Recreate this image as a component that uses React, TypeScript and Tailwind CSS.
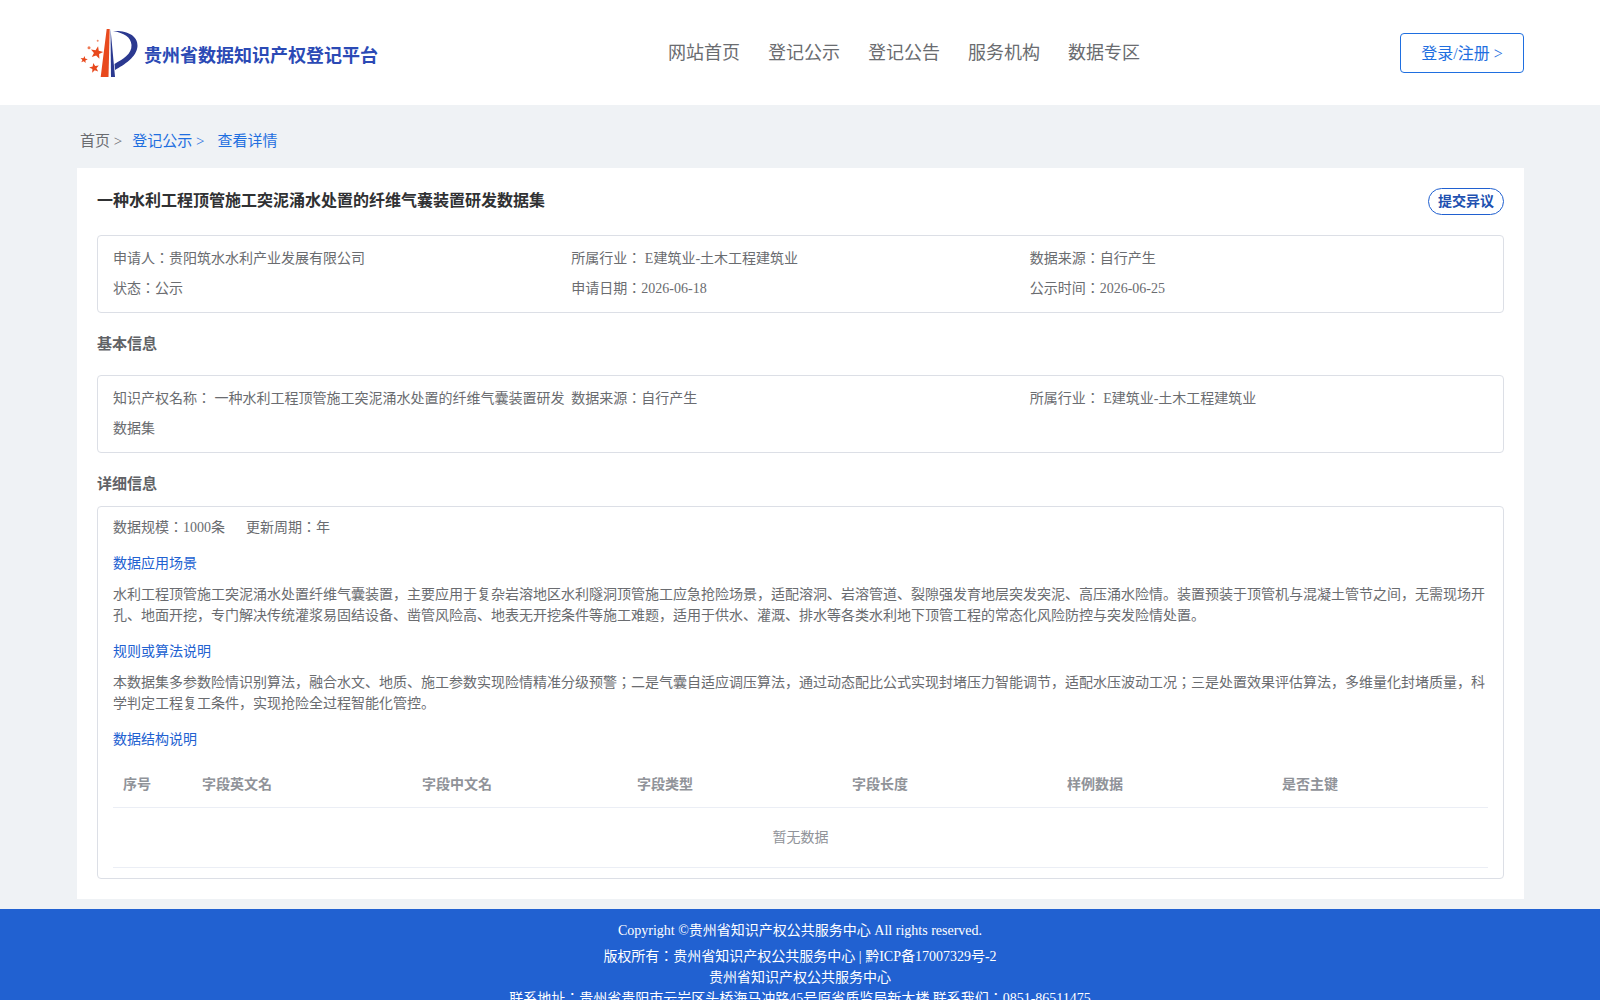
const FONT = "font-['Liberation_Serif','Noto_Sans_CJK_JP',serif]";

function star(cx: number, cy: number, r: number, rot: number) {
  const pts: string[] = [];
  for (let i = 0; i < 10; i++) {
    const a = ((rot + i * 36 - 90) * Math.PI) / 180;
    const rr = i % 2 === 0 ? r : r * 0.42;
    pts.push(`${(cx + rr * Math.cos(a)).toFixed(2)},${(cy + rr * Math.sin(a)).toFixed(2)}`);
  }
  return pts.join(" ");
}

function Logo() {
  return (
    <svg width="60" height="52" viewBox="0 0 60 52" className="shrink-0">
      <path d="M26.700 2 L29.700 2 L28.500 50 L20.700 50 Z" fill="#e8491d" />
      <path d="M30.500 2 L35 50 L31 50 Z" fill="#2b3990" />
      <path d="M33 4 C46 3 58 8 57.500 19 C57 30 44 38 35 43 L34.500 37 C43 32 52 27 51.500 18 C51 10 44 6 33 4 Z" fill="#2b3990" />
      <polygon points={star(16.7, 25.7, 6.6, 12)} fill="#e8491d" />
      <polygon points={star(4, 32.7, 3.8, 10)} fill="#e8491d" />
      <polygon points={star(14.3, 41, 5.2, -12)} fill="#e8491d" />
      <circle cx="9" cy="20.700" r="1.500" fill="#ee7a55" />
      <circle cx="17.700" cy="13.700" r="1" fill="#ee8a6a" />
    </svg>
  );
}

function Box({ children, className = "" }: { children: React.ReactNode; className?: string }) {
  return <div className={`rounded border border-[#dcdfe6] ${className}`}>{children}</div>;
}

const navs = ["网站首页", "登记公示", "登记公告", "服务机构", "数据专区"];
const cols = [
  ["序号", "w-[79px]"],
  ["字段英文名", "w-[220px]"],
  ["字段中文名", "w-[215px]"],
  ["字段类型", "w-[215px]"],
  ["字段长度", "w-[215px]"],
  ["样例数据", "w-[215px]"],
  ["是否主键", "flex-1"],
];

export default function App() {
  return (
    <div className={`${FONT} h-[1000px] overflow-hidden bg-[#eff2f5] text-[14px] text-[#6a6c70]`}>
      <header className="flex h-[105px] items-center bg-white pl-[80px] pr-[76px]">
        <div className="flex w-[470px] items-center">
          <Logo />
          <span className="ml-[4px] mt-[8px] text-[18px] font-bold text-[#2b4ab5]">贵州省数据知识产权登记平台</span>
        </div>
        <nav className="mt-[1px] ml-[118px] flex gap-[28px] text-[18px] text-[#6a6c70]">
          {navs.map((n) => <span key={n}>{n}</span>)}
        </nav>
        <button className="ml-auto h-[40px] w-[124px] rounded border border-[#1f6fe0] pt-[3px] text-[16px] text-[#1f6fe0]">登录/注册 &gt;</button>
      </header>

      <main className="pl-[77px] pr-[76px]">
        <div className="flex h-[63px] items-center pl-[3px] pt-[10px] text-[15px]">
          <span>首页 &gt;</span>
          <span className="ml-[10px] text-[#1f6fe0]">登记公示 &gt;</span>
          <span className="ml-[13px] text-[#1f6fe0]">查看详情</span>
        </div>

        <section className="h-[731px] bg-white px-[20px] pt-[20px]">
          <div className="flex h-[47px] items-start justify-between">
            <h1 className="mt-[1px] text-[16px] font-bold text-[#303133]">一种水利工程顶管施工突泥涌水处置的纤维气囊装置研发数据集</h1>
            <button className="h-[27px] rounded-[14px] border border-[#2060d0] px-[9px] text-[14px] font-bold text-[#2050b0]">提交异议</button>
          </div>

          <Box className="grid h-[78px] grid-cols-3 content-start px-[15px] pt-[8px] leading-[30px]">
            <div>申请人：贵阳筑水水利产业发展有限公司</div>
            <div>所属行业： E建筑业-土木工程建筑业</div>
            <div>数据来源：自行产生</div>
            <div>状态：公示</div>
            <div>申请日期：2026-06-18</div>
            <div>公示时间：2026-06-25</div>
          </Box>

          <h2 className="flex h-[62px] items-center text-[15px] font-bold text-[#606266]">基本信息</h2>

          <Box className="grid h-[78px] grid-cols-3 content-start px-[15px] pt-[8px] leading-[30px]">
            <div>知识产权名称： 一种水利工程顶管施工突泥涌水处置的纤维气囊装置研发数据集</div>
            <div>数据来源：自行产生</div>
            <div>所属行业： E建筑业-土木工程建筑业</div>
          </Box>

          <h2 className="flex h-[53px] items-center pt-[10px] text-[15px] font-bold text-[#606266]">详细信息</h2>

          <Box className="h-[373px] px-[15px] pt-[10px]">
            <div className="flex h-[21px] items-center gap-[21px]">
              <span>数据规模：1000条</span>
              <span>更新周期：年</span>
            </div>
            <div className="mt-[15px] leading-[21px] text-[#2161d1]">数据应用场景</div>
            <p className="mt-[10px] leading-[21px]">水利工程顶管施工突泥涌水处置纤维气囊装置，主要应用于复杂岩溶地区水利隧洞顶管施工应急抢险场景，适配溶洞、岩溶管道、裂隙强发育地层突发突泥、高压涌水险情。装置预装于顶管机与混凝土管节之间，无需现场开孔、地面开挖，专门解决传统灌浆易固结设备、凿管风险高、地表无开挖条件等施工难题，适用于供水、灌溉、排水等各类水利地下顶管工程的常态化风险防控与突发险情处置。</p>
            <div className="mt-[15px] leading-[21px] text-[#2161d1]">规则或算法说明</div>
            <p className="mt-[10px] leading-[21px]">本数据集多参数险情识别算法，融合水文、地质、施工参数实现险情精准分级预警；二是气囊自适应调压算法，通过动态配比公式实现封堵压力智能调节，适配水压波动工况；三是处置效果评估算法，多维量化封堵质量，科学判定工程复工条件，实现抢险全过程智能化管控。</p>
            <div className="mt-[15px] leading-[21px] text-[#2161d1]">数据结构说明</div>
            <div className="mt-[12px] flex h-[46px] items-center border-b border-[#ebeef5] font-bold text-[#909399]">
              {cols.map(([c, w]) => <div key={c} className={`${w} pl-[10px]`}>{c}</div>)}
            </div>
            <div className="flex h-[60px] items-center justify-center border-b border-[#ebeef5] text-[#909399]">暂无数据</div>
          </Box>
        </section>
      </main>

      <footer className="mt-[10px] bg-[#2161d1] pt-[11px] text-center text-[14px] leading-[21px] text-white">
        <div className="mb-[5px]">Copyright ©贵州省知识产权公共服务中心 All rights reserved.</div>
        <div>版权所有：贵州省知识产权公共服务中心 | 黔ICP备17007329号-2</div>
        <div>贵州省知识产权公共服务中心</div>
        <div>联系地址：贵州省贵阳市云岩区头桥海马冲路45号原省质监局新大楼 联系我们：0851-86511475</div>
      </footer>
    </div>
  );
}
